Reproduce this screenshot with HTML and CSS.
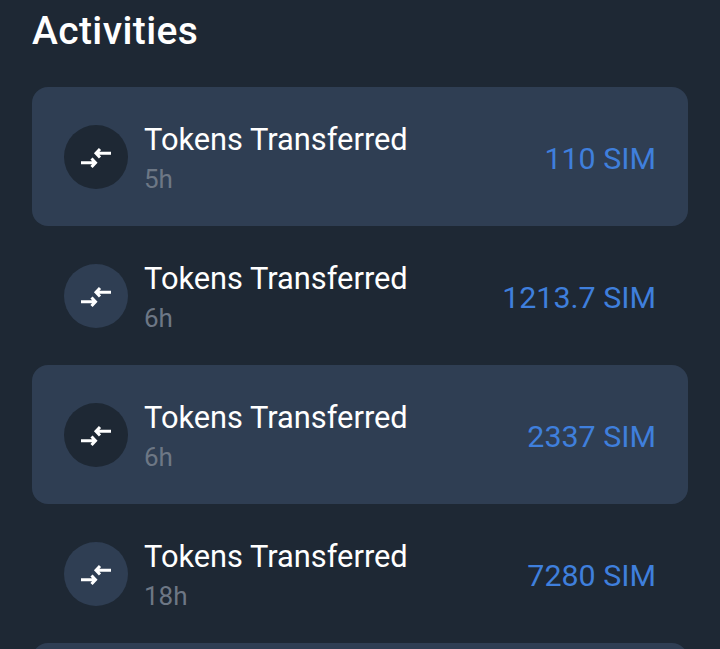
FILE: index.html
```html
<!DOCTYPE html>
<html lang="en">
<head>
<meta charset="utf-8">
<title>Activities</title>
<link rel="stylesheet" href="styles.css">
</head>
<body>
<main class="page">
  <h1 class="title">Activities</h1>
  <ul class="list">
    <li class="row row-alt">
      <span class="icon"><svg viewBox="0 0 32 32" width="32" height="32"><path d="M1 21.7H15M11.5 17.5l4 4.2-4 4.3M31 12.3H16M20 8l-4 4.3 4 4.2"/></svg></span>
      <div class="info"><div class="name">Tokens Transferred</div><div class="time">5h</div></div>
      <div class="amount">110 SIM</div>
    </li>
    <li class="row">
      <span class="icon"><svg viewBox="0 0 32 32" width="32" height="32"><path d="M1 21.7H15M11.5 17.5l4 4.2-4 4.3M31 12.3H16M20 8l-4 4.3 4 4.2"/></svg></span>
      <div class="info"><div class="name">Tokens Transferred</div><div class="time">6h</div></div>
      <div class="amount">1213.7 SIM</div>
    </li>
    <li class="row row-alt">
      <span class="icon"><svg viewBox="0 0 32 32" width="32" height="32"><path d="M1 21.7H15M11.5 17.5l4 4.2-4 4.3M31 12.3H16M20 8l-4 4.3 4 4.2"/></svg></span>
      <div class="info"><div class="name">Tokens Transferred</div><div class="time">6h</div></div>
      <div class="amount">2337 SIM</div>
    </li>
    <li class="row">
      <span class="icon"><svg viewBox="0 0 32 32" width="32" height="32"><path d="M1 21.7H15M11.5 17.5l4 4.2-4 4.3M31 12.3H16M20 8l-4 4.3 4 4.2"/></svg></span>
      <div class="info"><div class="name">Tokens Transferred</div><div class="time">18h</div></div>
      <div class="amount">7280 SIM</div>
    </li>
    <li class="row row-alt"></li>
  </ul>
</main>
</body>
</html>
```
FILE: styles.css
```css
html, body {
  margin: 0;
  height: 100%;
  overflow: hidden;
  background: #1e2834;
}
.page {
  padding: 8px 32px 0;
  font-family: Roboto, "Noto Sans", sans-serif;
}
.title {
  margin: 0 0 33px;
  height: 46px;
  line-height: 46px;
  font-size: 39px;
  font-weight: 500;
  letter-spacing: 0.01em;
  color: #fff;
}
.list {
  list-style: none;
  margin: 0;
  padding: 0;
}
.row {
  display: flex;
  align-items: center;
  height: 139px;
  padding: 0 32px;
  border-radius: 16px;
  box-sizing: border-box;
}
.row-alt {
  background: #2f3e53;
}
.icon {
  flex: none;
  width: 64px;
  height: 64px;
  border-radius: 50%;
  background: #2f3e53;
  display: flex;
  align-items: center;
  justify-content: center;
}
.row-alt .icon {
  background: #1e2834;
}
.icon svg {
  fill: none;
  stroke: #fff;
  stroke-width: 3;
}
.info {
  flex: 1;
  margin-left: 16px;
  padding-top: 5px;
}
.name {
  font-size: 30.8px;
  line-height: 40px;
  color: #fff;
}
.time {
  font-size: 26px;
  line-height: 38px;
  color: #6d7785;
}
.amount {
  font-size: 30.4px;
  padding-top: 4px;
  color: #3f7fdc;
}
```
